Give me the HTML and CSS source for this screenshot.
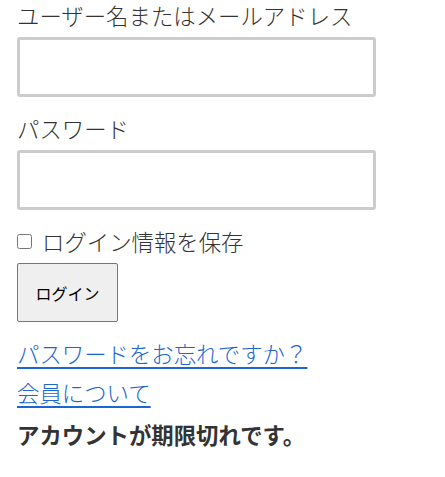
FILE: index.html
```html
<!DOCTYPE html>
<html lang="ja">
<head>
  <meta charset="UTF-8">
  <meta name="viewport" content="width=device-width, initial-scale=1.0">
  <title>ログイン</title>
  <link rel="stylesheet" href="styles.css">
</head>
<body>
  <form class="login-form">
    <label class="field-label" for="userLogin">ユーザー名またはメールアドレス</label>
    <input class="field-input" type="text" id="userLogin">

    <label class="field-label" for="userPass">パスワード</label>
    <input class="field-input" type="password" id="userPass">

    <label class="remember">
      <input type="checkbox" class="remember-box">
      ログイン情報を保存
    </label>

    <button type="button" class="login-btn">ログイン</button>
  </form>

  <p class="link-row"><a href="#">パスワードをお忘れですか？</a></p>
  <p class="link-row"><a href="#">会員について</a></p>
  <p class="notice">アカウントが期限切れです。</p>
</body>
</html>
```

FILE: styles.css
```css
body {
  margin: 0;
  padding: 0 17px;
  font-family: "Noto Sans CJK JP", "Noto Sans", sans-serif;
  font-size: 22.4px;
  font-weight: 300;
  line-height: 30px;
  color: #333;
  background: #fff;
}

.login-form {
  display: flex;
  flex-direction: column;
  align-items: flex-start;
}

.field-label {
  display: block;
  margin-bottom: 7px;
}

.field-input {
  box-sizing: border-box;
  width: 359px;
  height: 60px;
  margin: 0 0 16px;
  border: 3px solid #ccc;
  border-radius: 3px;
  background: #fff;
  font-size: 18px;
}

.remember {
  display: flex;
  align-items: center;
  margin-bottom: 7px;
}

.remember-box {
  width: 15px;
  height: 15px;
  margin: 0 10px 0 0;
}

.login-btn {
  width: 101px;
  height: 59px;
  padding: 0;
  border: 1px solid #767676;
  border-radius: 2px;
  background: #efefef;
  color: #000;
  font-family: "Noto Sans CJK JP", sans-serif;
  font-size: 16px;
  font-weight: 400;
}

.link-row {
  margin: 16px 0 0;
}

.link-row + .link-row {
  margin-top: 9px;
}

.link-row a {
  color: #1a66d3;
  text-decoration: underline;
  text-decoration-thickness: 2px;
  text-underline-offset: 4px;
}

.notice {
  margin: 12px 0 0;
  font-weight: bold;
}
```
